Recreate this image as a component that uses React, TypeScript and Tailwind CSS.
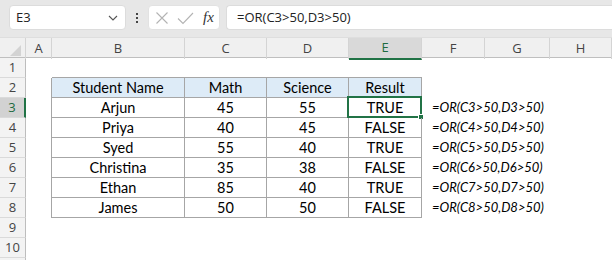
import React from "react";

const cols = ["A", "B", "C", "D", "E", "F", "G", "H"];
const data: [string, string, string, string][] = [
  ["Arjun", "45", "55", "TRUE"],
  ["Priya", "40", "45", "FALSE"],
  ["Syed", "55", "40", "TRUE"],
  ["Christina", "35", "38", "FALSE"],
  ["Ethan", "85", "40", "TRUE"],
  ["James", "50", "50", "FALSE"],
];

const gridCols = "grid grid-cols-[26px_26px_133px_82px_82px_73px_63px_65px_1fr]";
const cellFont = { fontFamily: "Lato, 'Liberation Sans', sans-serif" };
const uiFont = { fontFamily: "'Open Sans', 'Noto Sans', sans-serif" };

function RowHeader({ n }: { n: number }) {
  const sel = n === 3;
  return (
    <div
      className={`h-[20px] flex items-center justify-center border-b border-[#dadada] text-[13px] ${
        sel
          ? "bg-[#d2d2d2] text-[#1e6b41] border-r-2 border-r-[#217346]"
          : "bg-[#f3f3f3] text-[#444] border-r border-r-[#bdbdbd]"
      }`}
      style={uiFont}
    >
      {n <= 10 ? n : ""}
    </div>
  );
}

export default function App() {
  const rows = Array.from({ length: 11 }, (_, i) => i + 1);
  return (
    <div className="w-[612px] h-[260px] overflow-hidden bg-white relative">
      {/* toolbar */}
      <div className="h-[38px] bg-[#e7e7e7] flex items-start pt-[5px] border-b border-[#dedede]">
        <div
          className="ml-[9px] w-[117px] h-[25px] bg-white rounded-[4px] border border-[#dcdcdc] flex items-center pl-[6px] pr-[6px] text-[13px] text-[#222]"
          style={uiFont}
        >
          <span className="flex-1">E3</span>
          <svg width="10" height="6" viewBox="0 0 10 6" className="mr-[1px]">
            <path d="M1 1 L5 5 L9 1" fill="none" stroke="#555" strokeWidth="1.1" />
          </svg>
        </div>
        <div className="w-[22px] h-[25px] flex flex-col items-center justify-center gap-[2px]">
          <div className="w-[2px] h-[2px] bg-[#444]" />
          <div className="w-[2px] h-[2px] bg-[#444]" />
          <div className="w-[2px] h-[2px] bg-[#444]" />
        </div>
        <div className="w-[72px] h-[25px] bg-white rounded-[4px] border border-[#e2e2e2] flex items-center pl-[5px]">
          <svg width="14" height="14" viewBox="0 0 14 14" className="ml-[1px]">
            <path d="M1.5 1.5 L12.5 12.5 M12.5 1.5 L1.5 12.5" stroke="#b3b3b3" strokeWidth="1.1" />
          </svg>
          <svg width="17" height="14" viewBox="0 0 17 14" className="ml-[8px]">
            <path d="M1 7.5 L6 12.5 L16 2" fill="none" stroke="#b3b3b3" strokeWidth="1.1" />
          </svg>
          <span
            className="ml-[9px] text-[15px] italic text-[#333] leading-none"
            style={{ fontFamily: "'Liberation Serif', serif" }}
          >
            fx
          </span>
        </div>
        <div
          className="ml-[6px] flex-1 h-[25px] bg-white rounded-l-[4px] border border-r-0 border-[#dcdcdc] flex items-center pl-[10px] text-[13px] text-[#222]"
          style={uiFont}
        >
          =OR(C3&gt;50,D3&gt;50)
        </div>
      </div>
      {/* column headers */}
      <div className={`${gridCols} h-[20px] bg-[#f0f0f0] border-b border-[#bfbfbf]`}>
        <div className="relative border-r border-[#d4d4d4]">
          <svg width="11" height="11" viewBox="0 0 11 11" className="absolute right-[4px] bottom-[3px]">
            <path d="M11 0 L11 11 L0 11 Z" fill="#d3d3d3" />
          </svg>
        </div>
        {cols.map((c) => {
          const sel = c === "E";
          return (
            <div
              key={c}
              className={`flex items-center justify-center text-[13px] ${
                sel
                  ? "bg-[#d9d9d9] text-[#1e6b41] border-b-2 border-[#217346] border-r border-r-[#d4d4d4] -mb-[1px]"
                  : "text-[#444] border-r border-[#d4d4d4]"
              }`}
              style={uiFont}
            >
              {c}
            </div>
          );
        })}
      </div>
      {/* body */}
      <div className={gridCols} style={cellFont}>
        {rows.map((r) => {
          const inTable = r >= 2 && r <= 8;
          const isHeader = r === 2;
          const rec = r >= 3 && r <= 8 ? data[r - 3] : null;
          const vals = isHeader
            ? ["Student Name", "Math", "Science", "Result"]
            : rec
            ? rec
            : ["", "", "", ""];
          return (
            <React.Fragment key={r}>
              <RowHeader n={r} />
              <div className={`h-[20px] ${inTable ? "border-r border-[#a6a6a6]" : ""}`} />
              {vals.map((v, i) => (
                <div
                  key={i}
                  className={`h-[20px] flex items-center justify-center text-[14.5px] text-black relative ${
                    inTable ? "border-r border-b border-[#a6a6a6]" : ""
                  } ${r === 1 ? "border-b border-[#a6a6a6]" : ""} ${isHeader ? "bg-[#ddebf7]" : ""}`}
                >
                  {v}
                  {r === 3 && i === 3 && (
                    <>
                      <div className="absolute left-[-2px] top-[-2px] right-[-1px] bottom-[-1px] border-2 border-[#217346]" />
                      <div className="absolute right-[-3px] bottom-[-3px] w-[6px] h-[6px] bg-[#217346] border border-white" />
                    </>
                  )}
                </div>
              ))}
              <div className="h-[20px] relative">
                {rec && (
                  <span className="absolute left-[10px] top-0 h-[20px] flex items-center whitespace-nowrap italic text-[13px] text-black">
                    =OR(C{r}&gt;50,D{r}&gt;50)
                  </span>
                )}
              </div>
              <div className="h-[20px]" />
              <div className="h-[20px]" />
            </React.Fragment>
          );
        })}
      </div>
    </div>
  );
}
